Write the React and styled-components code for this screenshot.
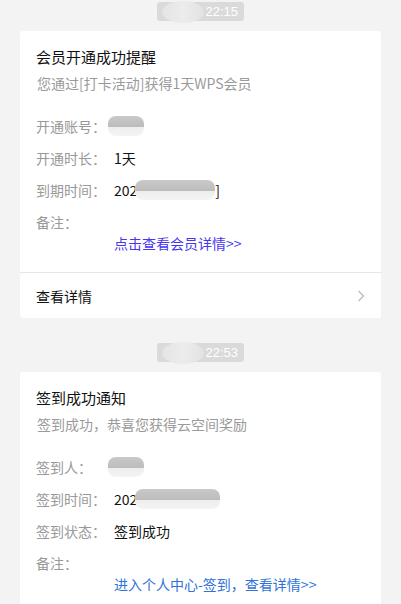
import React from 'react'
import styled, { createGlobalStyle } from 'styled-components'

const GlobalStyle = createGlobalStyle`
  body {
    margin: 0;
    background: #f3f3f3;
    font-family: "Noto Sans CJK SC", "Liberation Sans", sans-serif;
  }
`

const Page = styled.div`
  padding: 2px 20px 0;
  display: flex;
  flex-direction: column;
`

const TimeRow = styled.div`
  display: flex;
  justify-content: center;
  margin-top: ${p => (p.$first ? '0' : '25px')};
  margin-bottom: 10px;
`

const TimePill = styled.div`
  position: relative;
  width: 87px;
  height: 19px;
  border-radius: 3px;
  background: #dadada;
  color: #fff;
  font-size: 13px;
  line-height: 19px;
  display: flex;
  justify-content: flex-end;
  padding-right: 6px;
  box-sizing: border-box;
  font-family: "Liberation Sans", sans-serif;
`

const PillBlur = styled.span`
  position: absolute;
  left: 5px;
  top: -1px;
  width: 42px;
  height: 22px;
  border-radius: 50%;
  background: linear-gradient(90deg, #e4e4e4, #ececec 50%, #e2e2e2);
`

const Card = styled.div`
  background: #fff;
  border-radius: 3px;
  overflow: hidden;
`

const Body = styled.div`
  padding: 16px 16px 19px;
`

const Title = styled.div`
  font-size: 15px;
  line-height: 20px;
  color: #111;
`

const Sub = styled.div`
  font-size: 14px;
  line-height: 20px;
  color: #9a9a9a;
  margin-top: 6px;
  padding-left: 1px;
`

const Rows = styled.div`
  margin-top: 23px;
  display: flex;
  flex-direction: column;
  gap: 12px;
`

const Row = styled.div`
  display: flex;
  font-size: 14px;
  line-height: 20px;
`

const Label = styled.span`
  width: 78px;
  flex: none;
  color: #999;
`

const Value = styled.span`
  color: #111;
  display: flex;
  align-items: center;
`

const Blur = styled.span`
  display: inline-block;
  width: ${p => p.$w}px;
  height: 20px;
  margin-left: ${p => p.$ml || 0}px;
  border-radius: 8px;
  background: linear-gradient(180deg, #c9c9c9 0%, #bcbcbc 55%, #eeeeee 56%, #f4f4f4 100%);
`

const Note = styled.div`
  display: flex;
  flex-direction: column;
`

const LinkRow = styled.div`
  font-size: 14px;
  line-height: 20px;
  padding-left: 78px;
  margin-top: 1px;
  color: ${p => p.$color};
`

const Footer = styled.div`
  border-top: 1px solid #e6e6e6;
  height: 45px;
  padding: 0 16px;
  display: flex;
  align-items: center;
  justify-content: space-between;
  font-size: 14px;
  color: #111;
`

const Chevron = () => (
  <svg width="8" height="12" viewBox="0 0 8 12" fill="none">
    <path d="M1.5 1 L6.5 6 L1.5 11" stroke="#bbb" strokeWidth="1.3" />
  </svg>
)

function Stamp({ time, first }) {
  return (
    <TimeRow $first={first}>
      <TimePill>
        <PillBlur />
        {time}
      </TimePill>
    </TimeRow>
  )
}

export default function App() {
  return (
    <Page>
      <GlobalStyle />
      <Stamp time="22:15" first />
      <Card>
        <Body>
          <Title>会员开通成功提醒</Title>
          <Sub>您通过[打卡活动]获得1天WPS会员</Sub>
          <Rows>
            <Row>
              <Label>开通账号：</Label>
              <Value><Blur $w={36} $ml={-6} /></Value>
            </Row>
            <Row>
              <Label>开通时长：</Label>
              <Value>1天</Value>
            </Row>
            <Row>
              <Label>到期时间：</Label>
              <Value>202<Blur $w={80} $ml={-2} />]</Value>
            </Row>
            <Note>
              <Row>
                <Label>备注：</Label>
              </Row>
              <LinkRow $color="#4536f2">点击查看会员详情&gt;&gt;</LinkRow>
            </Note>
          </Rows>
        </Body>
        <Footer>
          <span>查看详情</span>
          <Chevron />
        </Footer>
      </Card>

      <Stamp time="22:53" />
      <Card>
        <Body>
          <Title>签到成功通知</Title>
          <Sub>签到成功，恭喜您获得云空间奖励</Sub>
          <Rows>
            <Row>
              <Label>签到人：</Label>
              <Value><Blur $w={36} $ml={-6} /></Value>
            </Row>
            <Row>
              <Label>签到时间：</Label>
              <Value>202<Blur $w={85} $ml={-2} /></Value>
            </Row>
            <Row>
              <Label>签到状态：</Label>
              <Value>签到成功</Value>
            </Row>
            <Note>
              <Row>
                <Label>备注：</Label>
              </Row>
              <LinkRow $color="#2f72d9">进入个人中心-签到，查看详情&gt;&gt;</LinkRow>
            </Note>
          </Rows>
        </Body>
      </Card>
    </Page>
  )
}
